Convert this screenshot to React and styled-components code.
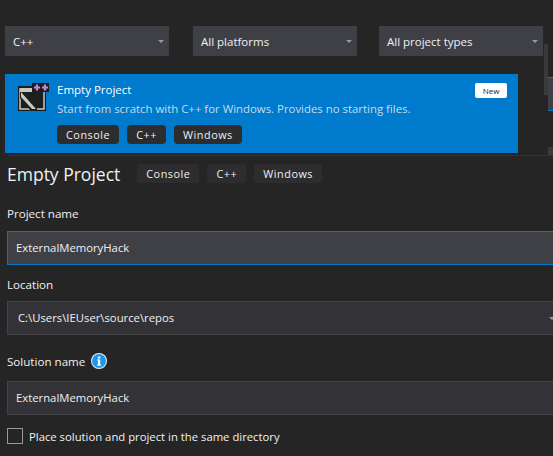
import React from "react";
import styled, { createGlobalStyle } from "styled-components";

const Global = createGlobalStyle`
  html, body { margin: 0; padding: 0; background: #252526; }
  body { width: 553px; height: 456px; overflow: hidden; font-family: "Open Sans", "Noto Sans", "Liberation Sans", sans-serif; color: #f1f1f1; font-size: 12px; }
`;

const Page = styled.div`
  width: 553px;
  height: 456px;
  overflow: hidden;
  box-sizing: border-box;
  padding-top: 26px;
  display: flex;
  flex-direction: column;
`;

const Filters = styled.div`
  display: flex;
  gap: 24px;
  padding-left: 5px;
`;

const FilterBox = styled.div`
  width: 164px;
  height: 30px;
  box-sizing: border-box;
  background: #3f3f46;
  display: flex;
  align-items: center;
  justify-content: space-between;
  padding: 0 5px 0 8px;
  font-size: 11.5px;
  &:nth-child(2) { margin-right: -2px; }
`;

const Caret = styled.span`
  width: 0;
  height: 0;
  border-left: 3.5px solid transparent;
  border-right: 3.5px solid transparent;
  border-top: 3.5px solid #999;
`;

const ListArea = styled.div`
  display: flex;
  margin-top: 18px;
  height: 79px;
`;

const Card = styled.div`
  width: 513px;
  margin-left: 5px;
  background: #007acc;
  box-sizing: border-box;
  padding: 7px 11px 0 13px;
  display: flex;
  gap: 8px;
`;

const CardBody = styled.div`
  flex: 1;
  min-width: 0;
`;

const CardHead = styled.div`
  display: flex;
  justify-content: space-between;
  align-items: center;
  height: 18px;
`;

const CardTitle = styled.div`
  font-size: 11.5px;
  color: #fff;
  padding-bottom: 2px;
`;

const NewBadge = styled.div`
  width: 32px;
  height: 15px;
  background: #fff;
  border-radius: 2px;
  color: #222;
  font-size: 8px;
  display: flex;
  align-items: center;
  justify-content: center;
`;

const CardDesc = styled.div`
  font-size: 11.4px;
  line-height: 19px;
  color: #c6dcec;
  white-space: nowrap;
`;

const Tags = styled.div`
  display: flex;
  gap: 8px;
`;

const CardTags = styled(Tags)`
  margin-top: 7px;
`;

const Tag = styled.div`
  height: 19px;
  padding: 0 9px;
  border-radius: 4px;
  background: #2d2d30;
  color: #f1f1f1;
  font-size: 10.8px;
  letter-spacing: 0.55px;
  display: flex;
  align-items: center;
`;

const Rail = styled.div`
  margin-left: 26px;
  display: flex;
  height: 79px;
`;

const Track = styled.div`
  width: 4px;
  height: 51px;
  margin-top: -30px;
  background: #3a3a3d;
`;

const Side = styled.div`
  width: 5px;
  display: flex;
  flex-direction: column;
`;

const Thumb = styled.div`
  margin-top: 3px;
  height: 34px;
  flex: none;
  box-sizing: border-box;
  border-top: 1px solid #007acc;
  border-bottom: 1px solid #007acc;
  background: #3f3f46;
`;

const SideStub = styled.div`
  margin-top: 36px;
  height: 8px;
  flex: none;
  background: #3a3a3d;
`;

const Divider = styled.div`
  height: 1px;
  background: #333335;
  margin: 2px 0 0 8px;
`;

const Form = styled.div`
  padding-left: 7px;
  display: flex;
  flex-direction: column;
`;

const HeadRow = styled.div`
  display: flex;
  align-items: center;
  gap: 17px;
  height: 33px;
  margin-top: 1px;
`;

const Heading = styled.h1`
  margin: 0;
  font-size: 17.5px;
  font-weight: 400;
  color: #f1f1f1;
`;

const Label = styled.div`
  display: flex;
  align-items: center;
  gap: 6px;
  height: 18px;
  box-sizing: border-box;
  padding-bottom: 2px;
  font-size: 11.6px;
  color: #f1f1f1;
  margin-top: ${(p) => p.$top}px;
  margin-bottom: ${(p) => p.$bottom}px;
`;

const Field = styled.div`
  width: 546px;
  height: 34px;
  box-sizing: border-box;
  display: flex;
  align-items: center;
  justify-content: space-between;
  padding-left: ${(p) => p.$pad}px;
  padding-bottom: 2px;
  font-size: 11.3px;
  color: #f1f1f1;
  background: ${(p) => (p.$active ? "#3f3f46" : "#333337")};
  border: 1px solid ${(p) => (p.$active ? "#007acc" : "#434346")};
  border-right: none;
`;

const CheckRow = styled.div`
  display: flex;
  align-items: center;
  gap: 6px;
  margin-top: 12px;
  font-size: 11.3px;
`;

const CheckText = styled.span`
  padding-top: 2px;
`;

const Check = styled.div`
  width: 16px;
  height: 16px;
  box-sizing: border-box;
  border: 1px solid #999;
`;

const FieldCaret = styled(Caret)`
  margin: 2px -2px 0 0;
`;

const IconSvg = styled.svg`
  flex: none;
  margin-top: 2px;
`;

const ProjectIcon = () => (
  <IconSvg width="31" height="28" viewBox="0 0 31 28">
    <rect x="0" y="3" width="28" height="25" fill="#1e1e1e" />
    <rect x="2" y="6" width="24" height="20" fill="none" stroke="#c8c8c8" strokeWidth="1.5" />
    <rect x="2" y="5" width="22" height="4" fill="#c8c8c8" />
    <path d="M2 9 L4 9 L19 25 L19 28 L13 28 L2 15 Z" fill="#1e1e1e" />
    <path d="M3 9 L18 26 L14 26 L3 14 Z" fill="#c8c8c8" />
    <rect x="14" y="0" width="17" height="9" fill="#1e1e1e" />
    <path d="M16 4.5h6M19 1.5v6M24 4.5h6M27 1.5v6" stroke="#c586d6" strokeWidth="2.2" fill="none" />
  </IconSvg>
);

const InfoIcon = () => (
  <svg width="16" height="16" viewBox="0 0 16 16">
    <circle cx="8" cy="8" r="8" fill="#f1f1f1" />
    <circle cx="8" cy="8" r="7" fill="#1c97ea" />
    <rect x="7" y="6.5" width="2.2" height="6" fill="#fff" />
    <rect x="7" y="3.5" width="2.2" height="2" fill="#fff" />
    <rect x="6" y="6.5" width="1.5" height="1" fill="#fff" />
    <rect x="6" y="11.5" width="4.2" height="1" fill="#fff" />
  </svg>
);

const tags = ["Console", "C++", "Windows"];

export default function App() {
  return (
    <Page>
      <Global />
      <Filters>
        <FilterBox>C++<Caret /></FilterBox>
        <FilterBox>All platforms<Caret /></FilterBox>
        <FilterBox>All project types<Caret /></FilterBox>
      </Filters>
      <ListArea>
        <Card>
          <ProjectIcon />
          <CardBody>
            <CardHead>
              <CardTitle>Empty Project</CardTitle>
              <NewBadge>New</NewBadge>
            </CardHead>
            <CardDesc>Start from scratch with C++ for Windows. Provides no starting files.</CardDesc>
            <CardTags>
              {tags.map((t) => <Tag key={t}>{t}</Tag>)}
            </CardTags>
          </CardBody>
        </Card>
        <Rail>
          <Track />
          <Side>
            <Thumb />
            <SideStub />
          </Side>
        </Rail>
      </ListArea>
      <Divider />
      <Form>
        <HeadRow>
          <Heading>Empty Project</Heading>
          <Tags>
            {tags.map((t) => <Tag key={t}>{t}</Tag>)}
          </Tags>
        </HeadRow>
        <Label $top={15} $bottom={8}>Project name</Label>
        <Field $active $pad={8}>ExternalMemoryHack</Field>
        <Label $top={11} $bottom={7}>Location</Label>
        <Field $pad={10}>C:\Users\IEUser\source\repos<FieldCaret /></Field>
        <Label $top={18} $bottom={10}>Solution name <InfoIcon /></Label>
        <Field $pad={8}>ExternalMemoryHack</Field>
        <CheckRow><Check /><CheckText>Place solution and project in the same directory</CheckText></CheckRow>
      </Form>
    </Page>
  );
}
